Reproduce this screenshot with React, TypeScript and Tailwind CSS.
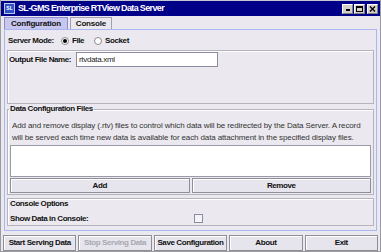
import React from "react";

function Btn({ children, disabled }: { children: React.ReactNode; disabled?: boolean }) {
  return (
    <div
      className={
        "flex-1 h-full flex items-center justify-center border border-[#8e8e96] bg-[#e6e4ec] shadow-[inset_1px_1px_0_#ffffff] text-[8px] font-bold tracking-[-0.4px] " +
        (disabled ? "text-[#a8a8b0]" : "text-[#111]")
      }
    >
      {children}
    </div>
  );
}

export default function App() {
  return (
    <div className="w-[381px] h-[252px] bg-[#ebe9ef] flex flex-col font-['Liberation_Sans',Arial,sans-serif] border-x border-b border-[#9a9aa0] overflow-hidden">
      {/* title bar */}
      <div className="h-[16px] bg-[#000088] flex items-center pl-[3px] pr-[2px] border-t border-[#c8c8d0]">
        <div className="w-[11px] h-[11px] bg-[#3050c8] border border-[#c0c8f0] flex items-center justify-center">
          <span className="text-[5px] leading-none font-bold text-white">SL</span>
        </div>
        <span className="ml-[3px] text-white font-bold text-[9px] tracking-[-0.65px] leading-none">
          SL-GMS Enterprise RTView Data Server
        </span>
        <div className="ml-auto flex gap-[1px]">
          <div className="w-[11px] h-[10px] bg-[#d4d0c8] border border-[#808080] border-t-white border-l-white flex items-end justify-center pb-[2px]">
            <div className="w-[4px] h-[2px] bg-black" />
          </div>
          <div className="w-[11px] h-[10px] bg-[#d4d0c8] border border-[#808080] border-t-white border-l-white flex items-center justify-center">
            <div className="w-[7px] h-[6px] border border-black border-t-2" />
          </div>
          <div className="w-[11px] h-[10px] bg-[#d4d0c8] border border-[#808080] border-t-white border-l-white ml-[1px] flex items-center justify-center">
            <svg width="7" height="6" viewBox="0 0 7 6">
              <path d="M1 0.5 L6 5.5 M6 0.5 L1 5.5" stroke="black" strokeWidth="1.4" />
            </svg>
          </div>
        </div>
      </div>

      {/* tabs */}
      <div className="h-[13px] flex items-end pl-[3px] gap-[2px]">
        <div className="h-[12px] px-[6px] bg-[#c6c6ee] border border-b-0 border-[#8c8cc8] flex items-center text-[8px] font-bold tracking-[-0.2px] text-[#111]">
          Configuration
        </div>
        <div className="h-[12px] px-[5px] bg-[#ebe9ef] border border-b-0 border-[#a0a0b0] flex items-center text-[8px] font-bold tracking-[-0.2px] text-[#111]">
          Console
        </div>
      </div>

      {/* panel */}
      <div className="h-[202px] mx-[3px] border border-[#a8b6f2] flex flex-col px-[2px]">
        {/* server mode */}
        <div className="h-[14px] mt-[4px] flex items-center pl-[1px] text-[8px] font-bold tracking-[-0.4px] text-[#111]">
          <span>Server Mode:</span>
          <div className="ml-[7px] w-[8px] h-[8px] rounded-full border border-[#8a8a90] bg-white flex items-center justify-center">
            <div className="w-[4px] h-[4px] rounded-full bg-black" />
          </div>
          <span className="ml-[3px]">File</span>
          <div className="ml-[10px] w-[8px] h-[8px] rounded-full border border-[#8a8a90] bg-white" />
          <span className="ml-[3px]">Socket</span>
        </div>

        {/* output box */}
        <div className="h-[54px] mt-[2px] border border-[#b4b4bc] shadow-[inset_1px_1px_0_#ffffff] pt-[1px] pl-[1px]">
          <div className="h-[15px] flex items-center">
            <span className="text-[8px] font-bold tracking-[-0.4px] text-[#111] w-[67px]">Output File Name:</span>
            <div className="w-[142px] h-[15px] bg-white border border-[#8a8aa0] flex items-center pl-[2px] text-[8px] tracking-[-0.3px] text-[#222]">
              rtvdata.xml
            </div>
          </div>
        </div>

        {/* data config files */}
        <fieldset className="h-[90px] mt-[1px] border border-[#b4b4bc] shadow-[inset_1px_1px_0_#ffffff] px-[2px] pb-[2px] flex flex-col">
          <legend className="text-[8px] font-bold tracking-[-0.4px] text-[#111] leading-[8px] px-[1px] ml-[-1px]">
            Data Configuration Files
          </legend>
          <div className="mt-[7px] pl-[2px] text-[8px] leading-[12px] tracking-[-0.12px] text-[#333] whitespace-nowrap">
            Add and remove display (.rtv) files to control which data will be redirected by the Data Server. A record
            <br />
            will be served each time new data is available for each data attachment in the specified display files.
          </div>
          <div className="mt-[1px] h-[32px] bg-white border border-[#9a9aa8]" />
          <div className="mt-[1px] h-[15px] flex gap-[2px]">
            <Btn>Add</Btn>
            <Btn>Remove</Btn>
          </div>
        </fieldset>

        {/* console options */}
        <div className="h-[28px] mt-[3px] border border-[#b4b4bc] shadow-[inset_1px_1px_0_#ffffff] px-[2px] flex flex-col">
          <div className="text-[8px] font-bold tracking-[-0.4px] text-[#111] leading-[8px] mt-[1px]">
            Console Options
          </div>
          <div className="h-[13px] mt-[4px] flex items-center">
            <span className="text-[8px] font-bold tracking-[-0.4px] text-[#111] w-[184px]">Show Data in Console:</span>
            <div className="w-[9px] h-[9px] bg-[#f4f4f8] border border-[#8a8aa0]" />
          </div>
        </div>
      </div>

      {/* bottom buttons */}
      <div className="h-[16px] mt-[4px] flex gap-[2px] px-[2px]">
        <Btn>Start Serving Data</Btn>
        <Btn disabled>Stop Serving Data</Btn>
        <Btn>Save Configuration</Btn>
        <Btn>About</Btn>
        <Btn>Exit</Btn>
      </div>
    </div>
  );
}
